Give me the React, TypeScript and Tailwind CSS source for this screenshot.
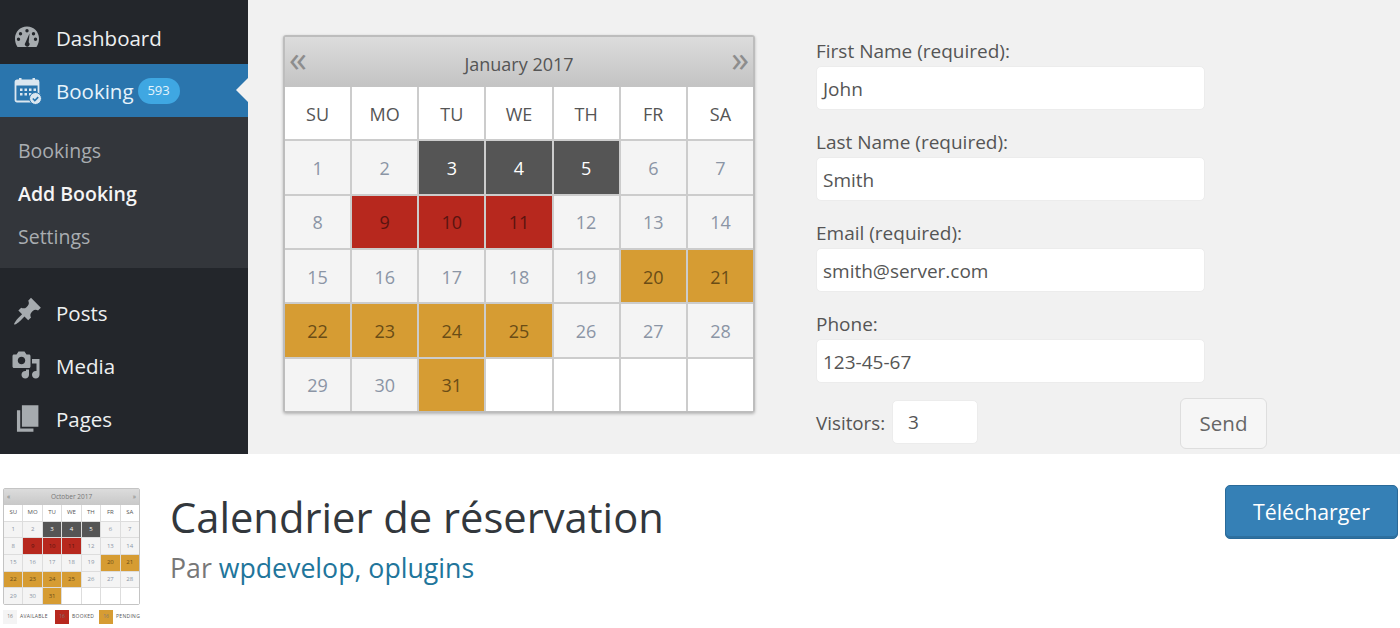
type Kind = 'head' | 'free' | 'dark' | 'red' | 'gold' | 'none';

interface Cell {
  label: string;
  kind: Kind;
}

const heads = ['SU', 'MO', 'TU', 'WE', 'TH', 'FR', 'SA'];

const kindOf = (day: number): Kind => {
  if (day >= 3 && day <= 5) return 'dark';
  if (day >= 9 && day <= 11) return 'red';
  if ((day >= 20 && day <= 25) || day === 31) return 'gold';
  return 'free';
};

const cells: Cell[] = [
  ...heads.map((label) => ({ label, kind: 'head' as Kind })),
  ...Array.from({ length: 31 }, (_, i) => ({ label: String(i + 1), kind: kindOf(i + 1) })),
  ...Array.from({ length: 4 }, () => ({ label: '', kind: 'none' as Kind })),
];

const cellColors: Record<Kind, string> = {
  head: 'bg-white text-[#555]',
  free: 'bg-[#f4f4f4] text-[#8b95a5]',
  dark: 'bg-[#555] text-white',
  red: 'bg-[#b7281e] text-[#5a1410]',
  gold: 'bg-[#d69c33] text-[#6a4c16]',
  none: 'bg-white',
};

function BigCalendar() {
  return (
    <div className="w-[472px] h-[378px] border-2 border-[#bdbdbd] rounded-[3px] shadow-[0_1px_3px_rgba(0,0,0,0.25)] flex flex-col">
      <div className="h-[50px] shrink-0 bg-gradient-to-b from-[#dcdcdc] to-[#c4c4c4] flex items-center justify-between px-[4px] border-b border-[#c4c4c4]">
        <span className="text-[36px] leading-none text-[#8d8d8d] -mt-[6px]">«</span>
        <span className="text-[18px] text-[#555] font-medium mt-[6px]">January 2017</span>
        <span className="text-[36px] leading-none text-[#8d8d8d] -mt-[6px]">»</span>
      </div>
      <div className="flex-1 grid grid-cols-7 grid-rows-6 gap-[2px] bg-[#cccccc]">
        {cells.map((c, i) => (
          <div
            key={i}
            className={`flex items-center justify-center pt-[2px] text-[18px] ${c.kind === 'head' ? 'font-medium' : ''} ${cellColors[c.kind]}`}
          >
            {c.label}
          </div>
        ))}
      </div>
    </div>
  );
}

function SmallCalendar() {
  return (
    <div className="w-[137px] h-[117px] border border-[#c4c4c4] rounded-[2px] flex flex-col">
      <div className="h-[16px] shrink-0 bg-gradient-to-b from-[#dcdcdc] to-[#c8c8c8] flex items-center justify-between px-[3px] text-[6.500px] text-[#777]">
        <span>«</span>
        <span>October 2017</span>
        <span>»</span>
      </div>
      <div className="flex-1 grid grid-cols-7 grid-rows-6 gap-px bg-[#dddddd]">
        {cells.map((c, i) => (
          <div key={i} className={`flex items-center justify-center text-[6px] ${cellColors[c.kind]}`}>
            {c.label}
          </div>
        ))}
      </div>
    </div>
  );
}

function LegendItem({ color, label }: { color: string; label: string }) {
  return (
    <div className="flex items-center gap-[3px]">
      <div className={`w-[14px] h-[14px] shrink-0 flex items-center justify-center text-[5px] text-[#777] ${color}`}>16</div>
      <span className="text-[5px] tracking-[0.3px] font-medium text-[#555]">{label}</span>
    </div>
  );
}

function DashboardIcon() {
  return (
    <svg viewBox="0 0 26 26" className="w-[26px] h-[26px]" fill="#a6abaf">
      <path
        fillRule="evenodd"
        d="M13 1.500C6 1.500 1 7 1 13.500c0 3 .8 6 2.500 8.500h19c1.700-2.500 2.500-5.500 2.500-8.500C25 7 20 1.500 13 1.500zM13 4a1.700 1.700 0 1 1 0 3.400A1.700 1.700 0 0 1 13 4zM6.500 7a1.700 1.700 0 1 1 0 3.400 1.700 1.700 0 0 1 0-3.400zM19.500 7a1.700 1.700 0 1 1 0 3.400 1.700 1.700 0 0 1 0-3.400zM4.500 12.500a1.700 1.700 0 1 1 0 3.400 1.700 1.700 0 0 1 0-3.400zM21.500 12.500a1.700 1.700 0 1 1 0 3.400 1.700 1.700 0 0 1 0-3.400zM15.500 8.500l-.8 8.800a2.400 2.400 0 1 1-3.200.2z"
      />
    </svg>
  );
}

function BookingIcon() {
  return (
    <svg viewBox="0 0 28 28" className="w-[28px] h-[28px]" fill="none">
      <rect x="1.500" y="3.500" width="23" height="21" rx="1.500" stroke="#dbe7f0" strokeWidth="1.800" />
      <rect x="1.500" y="3.500" width="23" height="5" fill="#dbe7f0" />
      <rect x="5" y="1" width="2.500" height="5" fill="#dbe7f0" />
      <rect x="18.500" y="1" width="2.500" height="5" fill="#dbe7f0" />
      <path
        d="M6 11.500h2.500v2.500H6zM10.500 11.500H13v2.500h-2.500zM15 11.500h2.500v2.500H15zM19.500 11.500H22v2.500h-2.500zM6 16h2.500v2.500H6zM10.500 16H13v2.500h-2.500zM15 16h2.500v2.500H15z"
        fill="#dbe7f0"
      />
      <circle cx="21.500" cy="21.500" r="6" fill="#dbe7f0" stroke="#2a75ad" strokeWidth="1" />
      <path d="M18.800 21.500l2 2 3.400-3.400" stroke="#2a75ad" strokeWidth="1.600" />
    </svg>
  );
}

function PinIcon() {
  return (
    <svg viewBox="0 0 20 20" className="w-[31px] h-[31px] -ml-[2px] -mt-[2px]" fill="#a6abaf">
      <path d="M10.440 3.020l1.820-1.820 6.360 6.350-1.830 1.820c-1.050-.68-2.480-.57-3.410.36l-.75.75c-.92.93-1.040 2.350-.35 3.410l-1.830 1.820-2.410-2.410-2.800 2.790c-.42.42-3.380 2.710-3.800 2.290s1.860-3.390 2.280-3.810l2.790-2.790L4.100 9.360l1.830-1.820c1.050.69 2.480.57 3.400-.36l.75-.75c.93-.92 1.050-2.350.36-3.410z" />
    </svg>
  );
}

function MediaIcon() {
  return (
    <svg viewBox="0 0 20 20" className="w-[30px] h-[30px] -ml-[3px] -mt-[2px]" fill="#a6abaf">
      <path d="M13 11V4c0-.55-.45-1-1-1h-1.670L9 1H5L3.670 3H2c-.55 0-1 .45-1 1v7c0 .55.45 1 1 1h10c.55 0 1-.45 1-1zM7 4.500c1.380 0 2.500 1.120 2.500 2.500S8.380 9.500 7 9.500 4.500 8.380 4.500 7 5.620 4.500 7 4.500zM14 6h5v10.500c0 1.380-1.120 2.500-2.500 2.500S14 17.880 14 16.500s1.120-2.500 2.500-2.500c.17 0 .34.020.5.050V9h-3V6zm-4 8.050V13h2v3.500c0 1.380-1.120 2.500-2.500 2.500S7 17.880 7 16.500 8.120 14 9.500 14c.17 0 .34.020.5.050z" />
    </svg>
  );
}

function PagesIcon() {
  return (
    <svg viewBox="0 0 20 20" className="w-[33px] h-[33px] -ml-[2px] -mt-[1px]" fill="#a6abaf">
      <path d="M6 15V2h10v13H6zm-1 1h8v2H3V5h2v11z" />
    </svg>
  );
}

function MenuRow({ icon, label }: { icon: React.ReactNode; label: string }) {
  return (
    <div className="flex items-center h-[53px]">
      <div className="w-[56px] shrink-0 pl-[14px] flex items-center">{icon}</div>
      <span className="text-[20.500px] pt-[2px] text-[#eef0f1]">{label}</span>
    </div>
  );
}

function Sidebar() {
  return (
    <aside className="w-[248px] shrink-0 bg-[#23262b] flex flex-col pt-[11px]">
      <MenuRow icon={<DashboardIcon />} label="Dashboard" />
      <div className="relative flex items-center h-[53px] bg-[#2a75ad]">
        <div className="w-[56px] shrink-0 pl-[14px] flex items-center">
          <BookingIcon />
        </div>
        <span className="text-[20.500px] pt-[2px] text-[#e6f3fb]">Booking</span>
        <span className="ml-[4px] h-[26px] w-[42px] rounded-full bg-[#3fa7e2] text-[#e4f3fc] text-[13px] pt-[1px] flex items-center justify-center">
          593
        </span>
        <div className="absolute right-0 top-[14px] border-y-[12px] border-y-transparent border-r-[12px] border-r-[#f1f1f1]" />
      </div>
      <div className="bg-[#33363b] h-[151px] pl-[18px] pt-[18px] flex flex-col gap-[11px] text-[19.500px] leading-[32px]">
        <span className="text-[#a9adb1]">Bookings</span>
        <span className="text-[#f5f5f5] font-semibold">Add Booking</span>
        <span className="text-[#a9adb1]">Settings</span>
      </div>
      <div className="pt-[18px] flex flex-col">
        <MenuRow icon={<PinIcon />} label="Posts" />
        <MenuRow icon={<MediaIcon />} label="Media" />
        <MenuRow icon={<PagesIcon />} label="Pages" />
      </div>
    </aside>
  );
}

function Field({ label, value }: { label: string; value: string }) {
  return (
    <div className="flex flex-col">
      <label className="text-[19px] leading-[31px] pt-[1px] -mb-[1px] text-[#555]">{label}</label>
      <div className="w-[389px] h-[44px] bg-white rounded-[5px] border border-[#ececec] flex items-center px-[6px] pt-[2px] text-[19px] text-[#555]">
        {value}
      </div>
    </div>
  );
}

function BookingForm() {
  return (
    <div className="flex flex-col gap-[16px] ml-[61px] w-[451px] pt-[35px]">
      <Field label="First Name (required):" value="John" />
      <Field label="Last Name (required):" value="Smith" />
      <Field label="Email (required):" value="smith@server.com" />
      <Field label="Phone:" value="123-45-67" />
      <div className="flex items-center -mt-[1px]">
        <span className="text-[18.800px] text-[#555] w-[76px]">Visitors:</span>
        <div className="w-[86px] h-[44px] self-start mt-[2px] bg-white rounded-[5px] border border-[#ececec] flex items-center px-[15px] text-[19px] text-[#555]">
          3
        </div>
        <button className="ml-[202px] w-[87px] h-[51px] bg-[#f6f6f6] rounded-[6px] border border-[#dedede] text-[20.500px] text-[#666]">
          Send
        </button>
      </div>
    </div>
  );
}

export default function App() {
  return (
    <div className="w-[1400px] h-[628px] bg-white overflow-hidden flex flex-col font-['Open_Sans',sans-serif]">
      <div className="h-[454px] flex bg-[#f1f1f1] shrink-0">
        <Sidebar />
        <div className="pl-[35px] pt-[35px]">
          <BigCalendar />
        </div>
        <BookingForm />
      </div>
      <div className="flex-1 flex pt-[31px] pl-[3px] pr-[2px]">
        <div className="w-[137px] shrink-0 pt-[3px] flex flex-col gap-[5px]">
          <SmallCalendar />
          <div className="grid grid-cols-[52px_44px_1fr]">
            <LegendItem color="bg-[#f4f4f4]" label="AVAILABLE" />
            <LegendItem color="bg-[#b7281e]" label="BOOKED" />
            <LegendItem color="bg-[#d69c33]" label="PENDING" />
          </div>
        </div>
        <div className="ml-[30px] flex-1 flex flex-col">
          <h1 className="text-[41.700px] leading-[60px] text-[#32373c] mt-[2px]">Calendrier de réservation</h1>
          <p className="text-[26.700px] leading-[40px] text-[#777] mt-[1px]">
            Par <span className="text-[#21759b]">wpdevelop, oplugins</span>
          </p>
        </div>
        <button className="w-[173px] h-[54px] bg-[#3580b6] rounded-[5px] border border-[#2a6a99] shadow-[inset_0_-2px_0_rgba(0,0,0,0.12)] text-[21.300px] text-white">
          Télécharger
        </button>
      </div>
    </div>
  );
}
